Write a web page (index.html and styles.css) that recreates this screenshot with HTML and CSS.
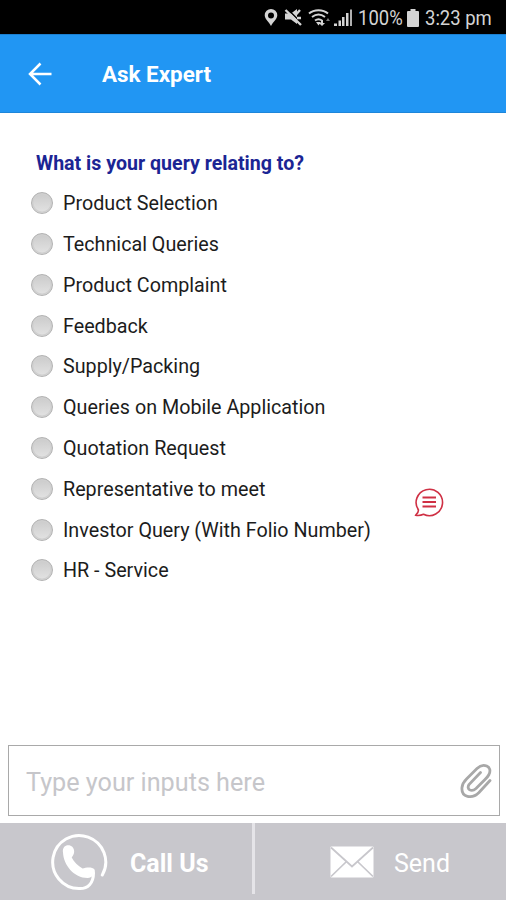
FILE: index.html
```html
<!DOCTYPE html>
<html lang="en">
<head>
<meta charset="utf-8">
<title>Ask Expert</title>
<link rel="stylesheet" href="styles.css">
</head>
<body>
<div class="screen">
  <div class="status">
    <svg class="status-icons" width="90" height="34" viewBox="0 0 90 34">
      <path fill="#d4d4d4" fill-rule="evenodd" d="M7 9a6.3 6.3 0 0 1 6.3 6.3C13.300 19 9 22 7 26 5 22 .7 19 .7 15.300A6.300 6.300 0 0 1 7 9zm0 3.400a3 3 0 1 0 0 6 3 3 0 0 0 0-6z"/>
      <path fill="#d4d4d4" d="M21 13.500h6l6-4.500v15l-6-4.500h-6z"/>
      <path stroke="#000" stroke-width="1.500" d="M23.500 9l15 15"/>
      <path stroke="#d4d4d4" stroke-width="2.400" d="M21.500 10l15.500 15M32 14.500l4-4.500M33 18h4"/>
      <g fill="none" stroke="#d4d4d4" stroke-width="2"><path d="M45 13.500c5-4.500 14-4.500 19 0M48 17c4-3 9-3 13 0M51 20.500c2-1.500 5-1.500 7 0"/></g>
      <path fill="#d4d4d4" d="M52 22h5l-2.500 3.500zM57 20h2v3h2l-3 3-3-3h2z"/>
      <path fill="#777" d="M64 18l2 3h-4z"/>
      <path fill="#d4d4d4" d="M70 23.500h3V26h-3zM74.500 20.500H77V26h-2.500zM78 17h2.500v9H78zM82 13h2.500v13H82z"/><path fill="#b0b0b0" d="M86 9.500h2V26h-2z"/>
    </svg>
    <span class="pct"><span>100%</span></span>
    <svg class="battery" width="12" height="18" viewBox="0 0 12 18"><path fill="#d4d4d4" d="M3.500 0h5v2H11q1 0 1 1v14q0 1-1 1H1q-1 0-1-1V3q0-1 1-1h2.500z"/></svg>
    <span class="clock"><span>3:23 pm</span></span>
  </div>
  <header class="appbar">
    <svg class="back" width="24" height="24" viewBox="0 0 24 24"><path fill="none" stroke="#fff" stroke-width="2.500" d="M24.500 12H3M13.500 1.500L3 12l10.500 10.500"/></svg>
    <h1>Ask Expert</h1>
  </header>
  <main>
    <h2>What is your query relating to?</h2>
    <ul>
      <li><i></i><span>Product Selection</span></li>
      <li><i></i><span>Technical Queries</span></li>
      <li><i></i><span>Product Complaint</span></li>
      <li><i></i><span>Feedback</span></li>
      <li><i></i><span>Supply/Packing</span></li>
      <li><i></i><span>Queries on Mobile Application</span></li>
      <li><i></i><span>Quotation Request</span></li>
      <li><i></i><span>Representative to meet</span></li>
      <li><i></i><span>Investor Query (With Folio Number)</span></li>
      <li><i></i><span>HR - Service</span></li>
    </ul>
  </main>
  <svg class="chat" width="32" height="32" viewBox="0 0 32 32"><path fill="none" stroke="#cf3044" stroke-width="1.600" stroke-linejoin="round" d="M5.500 23A13.200 13.200 0 1 1 10.500 27.300Q7 29 2.500 28.300 5.500 26 5.500 23z"/><path stroke="#cf3044" stroke-width="1.900" d="M9.500 10.500H23M9.500 15H23M9.500 19.500H23"/></svg>
  <div class="entry">
    <span>Type your inputs here</span>
    <svg width="32" height="36" viewBox="0 0 32 36"><path fill="none" stroke="#a8a8a8" stroke-width="2.800" stroke-linecap="round" d="M30 17.500L19 29.500C12 36.500 1 34.500 2 24.500 2.300 21 4 18.500 6.500 16L17 5.500C23-.5 33 3 29 11.500 28 13.500 26.500 15 25 16.500L16 25.500C11.500 29.500 6 26.500 9 21.500L20.500 9.500"/></svg>
  </div>
  <footer>
    <div class="call">
      <svg width="60" height="60" viewBox="0 0 60 60"><path fill="none" stroke="#fff" stroke-width="3" stroke-linecap="round" d="M52.300 43A26.500 26.500 0 1 0 29 56.500C38 57 43.500 51 43.500 41"/><path fill="#fff" d="M13 20.500C12 15 16 12.500 19.500 13.300 24 14.500 25.500 20 23 23.500L21.700 25.500C24 30 28 34 32.500 36.500 36 35.500 42 34.500 44.500 37.500 46 41 43 45.500 37.500 46 24 46 13.500 33 13 20.500z"/></svg>
      <span>Call Us</span>
    </div>
    <div class="line"></div>
    <div class="send">
      <svg width="44" height="32" viewBox="0 0 44 32"><rect x=".5" y=".5" width="43" height="31" rx="1" fill="#fff"/><path fill="none" stroke="#c8c7cc" stroke-width="1.700" d="M1 1.500l21 19 21-19M1 30.500l15-14.500M43 30.500L28 16"/></svg>
      <span>Send</span>
    </div>
  </footer>
</div>
</body>
</html>
```

FILE: styles.css
```css
* { box-sizing: border-box; }
body { margin: 0; font-family: Roboto, sans-serif; background: #fff; }
.screen { position: relative; width: 506px; height: 900px; display: flex; flex-direction: column; overflow: hidden; }
.status { height: 34px; flex: none; background: #000; color: #d4d4d4; display: flex; align-items: center; padding: 2px 0 0 264px; font-size: 21px; }
.status-icons { margin-top: -2px; flex: none; }
.pct, .clock { white-space: nowrap; flex: none; }
.pct { width: 45px; margin-left: 4px; }
.clock { width: 70px; margin-left: 6px; }
.pct span, .clock span { display: inline-block; transform: scaleX(.88); transform-origin: left; }
.battery { flex: none; margin-left: 4px; margin-top: -1px; }
.appbar { height: 79px; flex: none; background: #2196f3; border-top: 1px solid #1b7fd0; border-bottom: 1px solid #1d86da; display: flex; align-items: center; padding-left: 27px; color: #fff; }
.back { overflow: visible; }
h1 { margin: 1px 0 0 51px; font-size: 22.4px; font-weight: 700; }
main { flex: 1; padding-top: 37.5px; }
h2 { margin: 0 0 0 36px; font-size: 19.6px; line-height: 25px; height: 33px; color: #1b2594; font-weight: 700; white-space: nowrap; }
ul { list-style: none; margin: 0; padding: 0 0 0 31px; }
li { display: flex; align-items: center; height: 40.78px; font-size: 19.73px; color: #1c1c1c; white-space: nowrap; }
li i { width: 22px; height: 22px; margin: -1px 10px 0 0; border-radius: 50%; border: 1px solid #b2b2b2; background: linear-gradient(#cbcbcb, #e3e3e3); box-shadow: inset 0 0 0 1.500px #d0d0d0; }
.chat { position: absolute; left: 413px; top: 487px; }
.entry { flex: none; height: 71px; width: 492px; margin: 0 0 7px 8px; border: 1.500px solid #a9a9a9; display: flex; align-items: center; justify-content: space-between; padding: 0 7px 0 17px; color: #c6c6ca; font-size: 25.2px; }
.entry span { margin-top: 3px; }
footer { flex: none; height: 77px; background: #c8c7cc; display: flex; color: #fff; font-size: 25px; }
.call { width: 252px; display: flex; align-items: center; padding-left: 50px; font-weight: 700; }
.call span { margin-left: 20px; }
.line { width: 3px; height: 71px; background: #e5e4e8; }
.send { display: flex; align-items: center; padding-left: 75px; }
.send span { margin-left: 20px; }
.call span, .send span { margin-top: 3px; }
```
